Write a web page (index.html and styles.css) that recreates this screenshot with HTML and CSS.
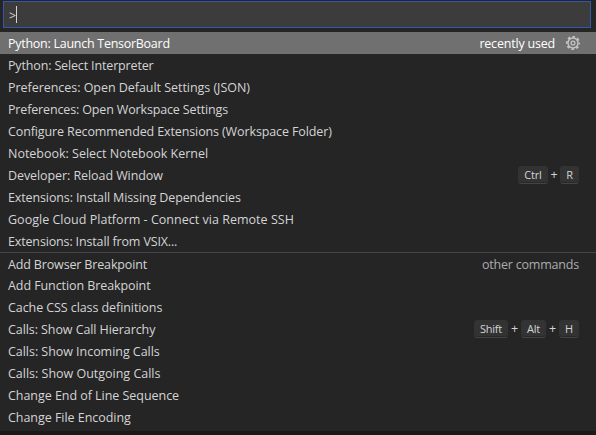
FILE: index.html
```html
<!DOCTYPE html>
<html lang="en">
<head>
<meta charset="utf-8">
<title>Command Palette</title>
<link rel="stylesheet" href="styles.css">
</head>
<body>
<main class="palette">
  <div class="input"><span class="prompt">&gt;</span><span class="caret"></span></div>
  <ul class="list">
    <li class="row selected"><span class="label tighter">Python: Launch TensorBoard</span><span class="group">recently used</span>
      <svg class="gear" viewBox="-8 -8 16 16" fill="none" stroke="currentColor"><circle r="5" stroke-width="1.4"/><circle r="6.2" stroke-width="1.8" stroke-dasharray="2.6 2.269" stroke-dashoffset="1.3"/><circle r="1.9" stroke-width="1.3"/></svg>
    </li>
    <li class="row"><span class="label tight">Python: Select Interpreter</span></li>
    <li class="row"><span class="label loose">Preferences: Open Default Settings (JSON)</span></li>
    <li class="row"><span class="label tight">Preferences: Open Workspace Settings</span></li>
    <li class="row"><span class="label snug">Configure Recommended Extensions (Workspace Folder)</span></li>
    <li class="row"><span class="label looser">Notebook: Select Notebook Kernel</span></li>
    <li class="row"><span class="label">Developer: Reload Window</span><span class="keys"><kbd class="ctrl">Ctrl</kbd><i>+</i><kbd class="r">R</kbd></span></li>
    <li class="row"><span class="label snug">Extensions: Install Missing Dependencies</span></li>
    <li class="row"><span class="label loosest">Google Cloud Platform - Connect via Remote SSH</span></li>
    <li class="row"><span class="label tight">Extensions: Install from VSIX...</span></li>
    <li class="row divided"><span class="label tight">Add Browser Breakpoint</span><span class="group">other commands</span></li>
    <li class="row"><span class="label">Add Function Breakpoint</span></li>
    <li class="row"><span class="label">Cache CSS class definitions</span></li>
    <li class="row"><span class="label">Calls: Show Call Hierarchy</span><span class="keys chord"><kbd class="shift">Shift</kbd><i>+</i><kbd class="alt">Alt</kbd><i>+</i><kbd class="h">H</kbd></span></li>
    <li class="row"><span class="label loose">Calls: Show Incoming Calls</span></li>
    <li class="row"><span class="label looser">Calls: Show Outgoing Calls</span></li>
    <li class="row"><span class="label loose">Change End of Line Sequence</span></li>
    <li class="row"><span class="label loose">Change File Encoding</span></li>
  </ul>
</main>
</body>
</html>
```
FILE: styles.css
```css
* { box-sizing: border-box; }
body { margin: 0; height: 435px; overflow: hidden; background: #1b1a1b; color: #d4d4d4; font: 12.5px/22px "Open Sans", "Noto Sans", sans-serif; letter-spacing: -0.2px; }
.palette { height: 431px; padding-top: 1px; background: #252526; }
.input { display: flex; align-items: center; height: 27px; margin: 0 5px 4px 3px; padding-left: 5px; border: 1px solid #3457ad; background: #3c3c3c; }
.prompt { padding-top: 2px; }
.caret { width: 1px; height: 17px; margin-left: 0; background: #d4d4d4; }
.list { margin: 0; padding: 0; list-style: none; }
.row { display: flex; align-items: center; height: 22px; padding: 0 17px 0 8px; white-space: nowrap; }
.label, .group { padding-top: 2px; }
.label { margin-right: auto; letter-spacing: -0.08px; }
.label.tighter { letter-spacing: -0.27px; }
.label.tight { letter-spacing: -0.15px; }
.label.snug { letter-spacing: -0.12px; }
.label.loose { letter-spacing: -0.04px; }
.label.looser { letter-spacing: -0.01px; }
.label.loosest { letter-spacing: 0.02px; }
.selected { background: #707070; color: #fff; }
.gear { width: 16px; height: 16px; margin: 0 -2px 0 10px; color: #c5c5c5; }
.divided { border-top: 1px solid #454548; }
.divided .group { color: #acacac; }
.keys { display: flex; align-items: center; line-height: 16px; }
.keys i { width: 12px; text-align: center; font-style: normal; }
.chord i { width: 13px; }
kbd { height: 18px; border: 1px solid #333334; border-bottom-color: #444; border-radius: 3px; background: #333334; box-shadow: inset 0 -1px 0 #292929; font: 11px/16px "Open Sans", sans-serif; text-align: center; }
.ctrl { width: 30px; }
.r { width: 19px; }
.shift { width: 34px; }
.alt { width: 25px; }
.h { width: 20px; }
```
